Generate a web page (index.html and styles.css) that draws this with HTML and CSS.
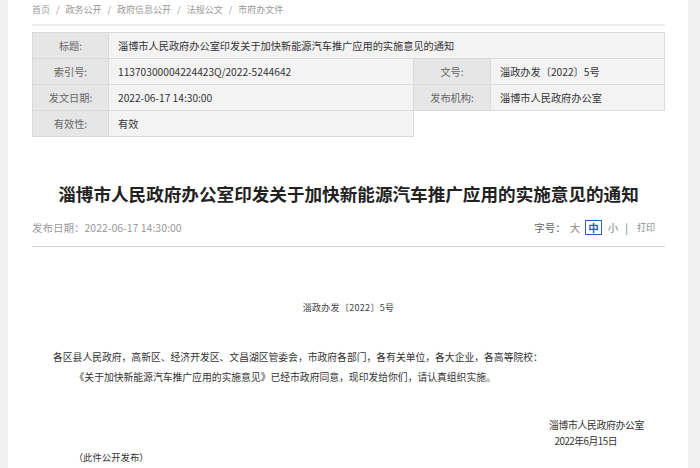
FILE: index.html
```html
<!DOCTYPE html>
<html lang="zh-CN">
<head>
  <meta charset="UTF-8">
  <meta name="viewport" content="width=device-width, initial-scale=1.0">
  <title>淄博市人民政府办公室印发关于加快新能源汽车推广应用的实施意见的通知</title>
  <link rel="stylesheet" href="styles.css">
</head>
<body>
  <div class="page">
    <div class="crumbs">
      <a href="#">首页</a><span class="sep">/</span><a href="#">政务公开</a><span class="sep">/</span><a href="#">政府信息公开</a><span class="sep">/</span><a href="#">法规公文</a><span class="sep">/</span><a href="#">市府办文件</a>
    </div>

    <table class="meta">
      <colgroup>
        <col class="col-label">
        <col class="col-main">
        <col class="col-label2">
        <col>
      </colgroup>
      <tr>
        <td class="label">标题:</td>
        <td class="value" colspan="3">淄博市人民政府办公室印发关于加快新能源汽车推广应用的实施意见的通知</td>
      </tr>
      <tr>
        <td class="label">索引号:</td>
        <td class="value">11370300004224423Q/2022-5244642</td>
        <td class="label">文号:</td>
        <td class="value">淄政办发〔2022〕5号</td>
      </tr>
      <tr>
        <td class="label">发文日期:</td>
        <td class="value">2022-06-17 14:30:00</td>
        <td class="label">发布机构:</td>
        <td class="value">淄博市人民政府办公室</td>
      </tr>
      <tr>
        <td class="label">有效性:</td>
        <td class="value">有效</td>
        <td class="blank" colspan="2"></td>
      </tr>
    </table>

    <h1 class="title">淄博市人民政府办公室印发关于加快新能源汽车推广应用的实施意见的通知</h1>

    <div class="info">
      <span class="date">发布日期：2022-06-17 14:30:00</span>
      <span class="tools">
        字号：<a href="#" class="size">大</a><a href="#" class="size current">中</a><a href="#" class="size">小</a><span class="bar">|</span><a href="#" class="print">打印</a>
      </span>
    </div>

    <div class="article">
      <p class="docno">淄政办发〔2022〕5号</p>
      <p class="lead">各区县人民政府，高新区、经济开发区、文昌湖区管委会，市政府各部门，各有关单位，各大企业，各高等院校：</p>
      <p class="indent">《关于加快新能源汽车推广应用的实施意见》已经市政府同意，现印发给你们，请认真组织实施。</p>

      <div class="sign">
        <div>淄博市人民政府办公室</div>
        <div class="sign-date">2022年6月15日</div>
      </div>
      <p class="indent note">（此件公开发布）</p>
    </div>
  </div>
</body>
</html>
```

FILE: styles.css
```css
body {
  margin: 0;
  padding: 0;
  background-color: #f1f1f1;
  color: #333;
  font-family: "Noto Sans CJK SC", "Noto Sans", sans-serif;
}

a {
  color: inherit;
  text-decoration: none;
}

.page {
  width: 633px;
  margin-left: 8px;
  padding: 0 23px 0 24px;
  background-color: #fff;
  height: 468px;
  overflow: hidden;
}

/* Breadcrumb */
.crumbs {
  height: 20px;
  line-height: 20px;
  padding-bottom: 4px;
  border-bottom: 2px solid #ececec;
  font-size: 9px;
  color: #999;
}

.crumbs .sep {
  padding: 0 6px;
}

/* Meta table */
.meta {
  width: 633px;
  margin-top: 6px;
  border-collapse: collapse;
  table-layout: fixed;
  font-size: 10.2px;
}

.meta .col-label {
  width: 76px;
}

.meta .col-main {
  width: 305px;
}

.meta .col-label2 {
  width: 77px;
}

.meta td {
  height: 25px;
  padding: 0;
  border: 1px solid #dadada;
  white-space: nowrap;
  overflow: hidden;
}

.meta .label {
  text-align: center;
  background-color: #e6e6e6;
  color: #666;
}

.meta .value {
  padding-left: 9px;
  background-color: #f3f3f3;
  color: #333;
}

.meta .blank {
  border: none;
  background-color: #fff;
}

/* Heading */
.title {
  margin: 44px 0 0;
  line-height: 26px;
  font-size: 17.6px;
  font-weight: bold;
  text-align: center;
  color: #222;
}

.info {
  display: flex;
  justify-content: space-between;
  align-items: center;
  margin-top: 10px;
  height: 20px;
  padding-bottom: 9px;
  border-bottom: 1px solid #d4d4d4;
  font-size: 10.5px;
  color: #999;
}

.tools {
  display: flex;
  align-items: center;
  padding-right: 10px;
  color: #666;
}

.tools .size {
  margin-left: 4px;
  color: #888;
}

.tools .current {
  margin-left: 5px;
  margin-right: 2px;
  padding: 0 2px;
  border: 1px solid #2d5ea8;
  line-height: 13px;
  color: #2d5ea8;
  font-weight: bold;
}

.tools .bar {
  margin-left: 7px;
  color: #777;
}

.tools .print {
  margin-left: 9px;
  font-size: 9px;
  color: #888;
}

/* Article */
.article {
  padding: 0 21px;
  font-size: 9.8px;
}

.article p {
  margin: 0;
}

.docno {
  margin-top: 53px !important;
  line-height: 16px;
  text-align: center;
  font-size: 9px;
  letter-spacing: 0.3px;
  color: #444;
}

.lead {
  margin-top: 31px !important;
  line-height: 20px;
}

.indent {
  line-height: 20px;
  text-indent: 2.2em;
}

.sign {
  display: flex;
  flex-direction: column;
  align-items: flex-end;
  margin-top: 30px;
  line-height: 16px;
  font-size: 9.8px;
  letter-spacing: -0.3px;
}

.sign-date {
  margin-right: 27px;
  letter-spacing: -0.5px;
}

.note {
  line-height: 16px;
  font-size: 9.4px;
}
```
